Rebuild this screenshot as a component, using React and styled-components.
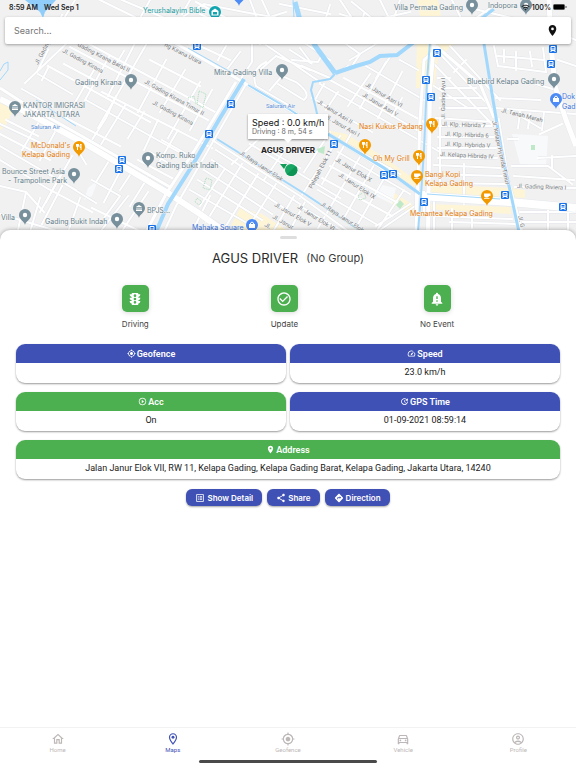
import React from 'react';
import styled, { createGlobalStyle, css } from 'styled-components';
import {
    MdTraffic, MdCheckCircleOutline, MdNotificationImportant, MdGpsFixed, MdSpeed,
    MdPlayCircleOutline, MdUpdate, MdLocationOn, MdListAlt, MdShare, MdDirections,
    MdOutlineHome, MdOutlineLocationOn, MdOutlineDirectionsCar, MdOutlineAccountCircle, MdWifi
} from 'react-icons/md';

const blue = '#3f51b5';
const green = '#4caf50';

const GlobalStyle = createGlobalStyle`
    * { box-sizing: border-box; }
    body {
        margin: 0;
        background: #fff;
        color: #212121;
        font-family: Inter, "Liberation Sans", sans-serif;
    }
    button, input { font-family: inherit; }
`

const Screen = styled.div`
    display: flex;
    flex-direction: column;
    min-height: 100vh;
`
const MapArea = styled.section`
    position: relative;
    height: 242px;
    overflow: hidden;
    background: #f1f1f2;
`
const MapSvg = styled.svg`
    position: absolute;
    top: 0;
    left: 0;
    width: 100%;
    height: 100%;
`
const StatusBar = styled.div`
    position: relative;
    display: flex;
    align-items: center;
    gap: 6px;
    height: 14px;
    padding: 0 9px;
    font-size: 7px;
    font-weight: 600;
    color: #222;
`
const StatusRight = styled.div`
    display: flex;
    align-items: center;
    gap: 2px;
    margin-left: auto;
`
const SearchBar = styled.form`
    position: relative;
    display: flex;
    align-items: center;
    height: 27px;
    margin: 3px 5px 0;
    padding: 0 12px 0 9px;
    background: #fff;
    border-radius: 2px;
    box-shadow: 0 1px 3px rgba(0, 0, 0, 0.35);
`
const SearchInput = styled.input`
    flex: 1;
    min-width: 0;
    padding: 0;
    border: 0;
    outline: 0;
    background: none;
    font-size: 9px;
    &::placeholder {
        color: #757575;
        opacity: 1;
    }
`
const PinButton = styled.button`
    display: flex;
    padding: 0;
    border: 0;
    background: none;
    color: #111;
    font-size: 13px;
`
const VehicleTip = styled.div`
    position: absolute;
    top: 114px;
    left: 50%;
    width: 80px;
    transform: translateX(-50%);
    padding: 3px 4px;
    background: #fff;
    font-size: 9px;
    line-height: 11px;
    white-space: nowrap;
    color: #111;
    box-shadow: 0 1px 2px rgba(0, 0, 0, 0.45);
    &:after {
        content: '';
        position: absolute;
        top: 100%;
        left: 50%;
        margin-left: -4px;
        border: 4px solid transparent;
        border-top-color: #fff;
        border-bottom: 0;
    }
`
const TipNote = styled.div`
    font-size: 7px;
    line-height: 8px;
    color: #666;
`
const Sheet = styled.main`
    position: relative;
    flex: 1;
    margin-top: -12px;
    padding-top: 6px;
    background: #fff;
    border-radius: 10px 10px 0 0;
    box-shadow: 0 0 4px rgba(0, 0, 0, 0.35);
`
const Handle = styled.div`
    width: 17px;
    height: 3px;
    margin: 0 auto;
    border-radius: 2px;
    background: #dedede;
`
const Title = styled.h1`
    display: flex;
    justify-content: center;
    align-items: center;
    gap: 8px;
    margin: 9px 0 0;
    font-size: 13px;
    line-height: 20px;
    font-weight: 400;
    color: #2b2b2b;
    small {
        font-size: 11px;
        color: #3c3c3c;
    }
`
const StateRow = styled.div`
    display: flex;
    justify-content: space-evenly;
    margin-top: 17px;
`
const StateItem = styled.div`
    display: flex;
    flex-direction: column;
    align-items: center;
    gap: 7px;
    font-size: 8px;
    line-height: 10px;
    color: #444;
`
const StateTile = styled.button`
    display: flex;
    align-items: center;
    justify-content: center;
    width: 27px;
    height: 27px;
    padding: 0;
    border: 0;
    border-radius: 5px;
    background: ${green};
    color: #fff;
    font-size: 16px;
    box-shadow: 0 1px 5px rgba(0, 0, 0, 0.15);
`
const CardGrid = styled.div`
    display: grid;
    grid-template-columns: 1fr 1fr;
    gap: 9px 4px;
    padding: 15px 16px 0;
`
const Card = styled.section`
    height: 39px;
    overflow: hidden;
    border-radius: 9px;
    background: #fff;
    font-family: Roboto, Inter, sans-serif;
    box-shadow: 0 1px 2px rgba(0, 0, 0, 0.4);
    text-align: center;
    ${props => props.$wide && css`
        grid-column: 1 / -1;
    `}
`
const CardHead = styled.h2`
    display: flex;
    align-items: center;
    justify-content: center;
    gap: 1px;
    height: 19px;
    margin: 0;
    background: ${props => props.$color};
    color: #fff;
    font-size: 9px;
    font-weight: 600;
`
const CardBody = styled.p`
    margin: 0;
    font-size: 9px;
    line-height: 19px;
`
const Actions = styled.div`
    display: flex;
    justify-content: center;
    gap: 5px;
    padding: 10px 16px;
`
const ActionButton = styled.button`
    display: flex;
    align-items: center;
    gap: 2px;
    height: 17px;
    padding: 0 9px;
    border: 0;
    border-radius: 6px;
    background: ${blue};
    color: #fff;
    font-size: 8px;
    font-weight: 600;
    box-shadow: 0 1px 2px rgba(0, 0, 0, 0.35);
    svg {
        font-size: 10px;
    }
`
const TabBar = styled.nav`
    position: relative;
    display: grid;
    grid-template-columns: repeat(5, 1fr);
    height: 33px;
    padding-top: 4px;
    background: #fff;
    border-top: 1px solid #f2f2f2;
`
const Tab = styled.a`
    display: flex;
    flex-direction: column;
    align-items: center;
    color: ${props => props.$active ? blue : '#bdb7b7'};
    font-family: Roboto, Inter, sans-serif;
    font-size: 6px;
    line-height: 8px;
    text-decoration: none;
    svg {
        font-size: 14px;
    }
`
const HomeIndicator = styled.div`
    width: 31%;
    height: 3px;
    margin: 0 auto 5px;
    border-radius: 2px;
    background: #4a4a4a;
`

// ---- map data ----

const lakes = [
    'M25 0H56L45 12L43 18L40 12Z',
];

const yellow = [
    'M417 34L456 42L438 58L434 88H416Z',
    'M417 0H438L441 16H420Z',
    'M326 130L346 134L384 157L418 182V192L384 171Z',
    'M240 208L262 214L290 232H228Z',
    'M380 184L412 204L417 216L384 200Z',
    'M427 184L512 188L525 190V198L427 192Z',
    'M427 204L511 207V214L427 209Z',
    'M0 98L14 108L6 125L0 130Z',
];

const minorRoads = [
    // north west
    'M67 43L25 83M60 25L75 0M62 15L46 46M22 89L52 106M48 66L150 122M38 74L72 94M37 72L48 50M64 64L94 80',
    'M94 70L66 118M110 55L85 100M124 51L116 64M134 45L108 96M70 47L208 120M78 38L215 112M150 60L200 86M48 68L42 80',
    'M147 43L98 128M166 60L138 112M185 70L160 112M200 82L168 138M212 90L190 130M100 0L190 44M122 0L212 38M150 0L140 18L230 60',
    'M86 100L204 166M102 92L212 148M126 104L100 146M144 112L128 138M158 120L144 150M178 130L158 164M66 118L120 146',
    // north centre
    'M190 0L182 14M200 14L260 44M184 16L204 4L244 12L300 22M196 2L230 20L290 28M262 0L272 22M250 0L256 16M280 4L330 14M286 12L260 20',
    'M252 44V62L240 80M240 52L228 68M226 46L218 60M266 45L320 82M266 62Q250 70 256 86L290 106M260 70L276 56L310 70M278 84L304 100Q312 94 296 82L282 76L270 90',
    'M290 50L312 64L300 48M306 44L330 60M322 55L318 62L292 60M302 66L330 78L348 66M346 44L360 54L352 66',
    'M340 0L356 24M352 2L374 20L410 12M364 14L356 40M380 0L390 20M340 14L372 24L416 20M330 5L322 30M376 44L350 60M400 0L394 18',
    // Asri and Elok grid
    'M320 84L440 152M330 80L352 92L420 132M344 78L424 122M366 66L424 100M370 74L348 106M386 62L360 108M402 72L378 118M392 54L376 78M400 60L418 70',
    'M312 98L372 132M324 84L316 98M338 92L326 110M402 98L392 116M340 136L300 198M352 132L322 184M364 150L318 228M378 158L344 218M390 168L358 224',
    'M346 144L400 174M338 152L410 194M330 166L400 204M322 178L392 216M318 190L376 224M418 204L380 230M410 204L376 226M404 190L376 232',
    // south centre
    'M216 150L300 204M212 160L290 212M204 170L272 214M198 180L262 220M190 190L252 226M180 200L228 230M210 196L196 224M224 170L200 206',
    'M242 164L206 222M258 174L226 226M276 184L248 228M294 196L274 230M306 200L290 230M250 144L340 198M262 136L232 164M286 148L264 180M330 132L304 172M264 148L300 168M300 206L344 232',
    // south west
    'M0 124L60 152M0 134L50 160M6 120L38 136M40 120L22 150M56 130L40 160M0 146L76 190M0 160L50 190L92 212M96 203L46 172M72 156L40 212M80 154L86 164',
    'M0 186L26 192L44 212M26 192L18 230M40 198L30 232M62 186L42 224M92 180L120 196L104 218M136 166L120 190M150 174L130 206M112 156L96 182M124 164L104 202',
    'M92 208L150 236M138 160L172 178M150 152L180 170M162 140L190 156M88 146L106 118L116 96M60 176L46 202M0 214L60 232M80 198L68 232M128 196L100 232M148 192L120 234',
    // east
    'M440 54L495 112M450 46L500 100M466 60L454 72M432 62L492 124M434 86L468 108M440 88H476M440 98H482M440 108H490M436 118L494 122M438 78L450 78',
    'M494 46L498 66L546 72L543 48M504 50V62M516 52V70M530 52L532 66M498 56L544 60M470 8L520 20L550 24M452 0L462 20M496 4L476 18M536 84L556 90M496 98L540 100',
    'M438 126H492M438 137H494M438 148H496M438 158H497M434 165L500 168M434 174L502 176M434 183L505 184M440 118V186M434 196V232M452 209V232M472 210V228M450 222L515 224M464 164V204M434 216L512 219M495 108L575 114',
    'M512 166H548L572 184M514 176L574 180M515 187L576 188M508 139H518M538 158L576 156M540 134L562 124M552 156V168M510 110L540 128M520 112L518 128M530 114L528 128M544 112L542 130M520 212H576M522 222H576M548 210V232M568 212V232M558 60L576 66M556 32L576 40',
];

const mainRoads = [
    { d: 'M0 99L30 114L84 143L168 193L200 214L228 234', w: 6 },
    { d: 'M0 88L28 106L78 134L170 187', w: 3 },
    { d: 'M236 82L196 148L166 194L146 232', w: 3 },
    { d: 'M246 84L222 126L176 206L164 232', w: 2 },
    { d: 'M170 40L236 78L300 116L382 168L418 192', w: 3 },
    { d: 'M212 140L300 196L352 234', w: 2 },
    { d: 'M420 196L510 202L576 208', w: 8 },
    { d: 'M416 192H424V214H416Z', w: 2 },
    { d: 'M434 44L430 90L428 230', w: 4 },
    { d: 'M438 48L424 60L420 120L416 230', w: 3 },
    { d: 'M436 46L480 84L494 118', w: 3 },
    { d: 'M498 118L508 180L522 232', w: 3 },
    { d: 'M549 0L551 46L555 86L566 120L576 146', w: 5 },
];

const water = [
    { d: 'M244 79L220 118L192 166L168 204L156 232', w: 4 },
    { d: 'M36 100L76 126', w: 1 },
    { d: 'M188 48L236 75', w: 1 },
    { d: 'M248 85L284 106L328 134', w: 2 },
    { d: 'M328 134L384 168L420 194', w: 3 },
    { d: 'M427 194L500 199', w: 1 },
    { d: 'M217 139L305 194L362 232', w: 2 },
    { d: 'M293 0L294 18', w: 1 },
    { d: 'M295 2L300 20L316 47L335 73', w: 5 },
    { d: 'M335 73L356 66L370 62L380 56L397 55L414 42', w: 4 },
    { d: 'M335 74L330 79L313 82L311 90L315 105L318 118', w: 2 },
    { d: 'M482 18L494 9', w: 3 },
    { d: 'M430 42L427 80L424 150L421 195L418 232', w: 2 },
    { d: 'M484 44L493 100L503 158L519 232', w: 3 },
    { d: 'M0 80L8 70V62L4 64L0 71', w: 1 },
];

const greens = [
    'M317 149L325 146L324 154L318 152Z', 'M396 205L400 200L404 204L400 209Z', 'M531 145H535V150H531Z',
];

const streetNames = [
    { x: 38, y: 65, r: -62, t: 'Jl. Gading' },
    { x: 62, y: 52, r: 28, t: 'Jl. Gading Kirana' },
    { x: 77, y: 46, r: 27, t: 'Gading Kirana Barat II' },
    { x: 164, y: 46, r: 27, t: 'ng Kirana Utara' },
    { x: 144, y: 83, r: 29, t: 'Jl. Gading Kirana Timur II' },
    { x: 152, y: 104, r: 28, t: 'Jl. Gading Kirana' },
    { x: 317, y: 103, r: 32, t: 'Jl. Janur Asri II' },
    { x: 325, y: 118, r: 30, t: 'Jl. Janur Asri I' },
    { x: 365, y: 86, r: 31, t: 'Jl. Janur Asri VI' },
    { x: 362, y: 96, r: 31, t: 'Jl. Janur Asri V' },
    { x: 239, y: 154, r: 33, t: 'Jl. Raya Janur Elok' },
    { x: 320, y: 205, r: 33, t: 'Jl. Raya Janur Elok' },
    { x: 274, y: 206, r: 30, t: 'Jl. Janur Elok V' },
    { x: 297, y: 208, r: 32, t: 'Jl. Janur Elok VI' },
    { x: 272, y: 218, r: 30, t: 'Jl. Janur' },
    { x: 264, y: 226, r: 30, t: 'Jl.' },
    { x: 335, y: 161, r: 31, t: 'Jl. Janur Elok X' },
    { x: 338, y: 176, r: 33, t: 'Jl. Janur Elok IX' },
    { x: 312, y: 189, r: -62, t: 'Pelepah Elok 11' },
    { x: 445, y: 119, r: -90, t: 'Jl. Gading Ayu I' },
    { x: 501, y: 112, r: 14, t: 'Jl. Tanah Merah' },
    { x: 442, y: 126, r: 2, t: 'Jl. Klp. Hibrida 7' },
    { x: 445, y: 136, r: 2, t: 'Jl. Klp. Hibrida 6' },
    { x: 445, y: 146, r: 2, t: 'Jl. Klp. Hybrida V' },
    { x: 440, y: 156, r: 3, t: 'Jl. Kelapa Hibrida IV' },
    { x: 492, y: 121, r: 78, t: 'Jl. Kelapa Hybrida Timur' },
    { x: 517, y: 188, r: 2, t: 'Jl. Gading Riviera I' },
    { x: 518, y: 216, r: 78, t: 'Jl. G' },
];

const slate = '#667e8a';
const orange = '#e37c0a';
const places = [
    { x: 143, y: 13, t: 'Yerushalayim Bible', c: '#17999f' },
    { x: 394, y: 10, t: 'Villa Permata Gading', c: slate },
    { x: 488, y: 8, t: 'Indopora', c: slate },
    { x: 75, y: 85, t: 'Gading Kirana', c: slate },
    { x: 214, y: 75, t: 'Mitra Gading Villa', c: slate },
    { x: 467, y: 84, t: 'Bluebird Kelapa Gading', c: slate },
    { x: 23, y: 108, t: 'KANTOR IMIGRASI', c: slate },
    { x: 23, y: 117, t: 'JAKARTA UTARA', c: slate },
    { x: 562, y: 99, t: 'Dok', c: '#3d76dc' },
    { x: 562, y: 109, t: 'Gad', c: '#3d76dc' },
    { x: 31, y: 148, t: "McDonald's", c: orange },
    { x: 22, y: 157, t: 'Kelapa Gading', c: orange },
    { x: 2, y: 174, t: 'Bounce Street Asia', c: slate },
    { x: 8, y: 183, t: '- Trampoline Park', c: slate },
    { x: 156, y: 158, t: 'Komp. Ruko', c: slate },
    { x: 156, y: 168, t: 'Gading Bukit Indah', c: slate },
    { x: 147, y: 213, t: 'BPJS...', c: slate },
    { x: 45, y: 224, t: 'Gading Bukit Indah', c: slate },
    { x: 1, y: 220, t: 'Villa', c: slate },
    { x: 192, y: 230, t: 'Mahaka Square', c: '#3d76dc' },
    { x: 359, y: 129, t: 'Nasi Kukus Padang', c: orange },
    { x: 373, y: 161, t: 'Oh My Grill', c: orange },
    { x: 425, y: 177, t: 'Bangi Kopi', c: orange },
    { x: 425, y: 186, t: 'Kelapa Gading', c: orange },
    { x: 410, y: 216, t: 'Menantea Kelapa Gading', c: orange },
];

const pins = [
    [131, 80], [282, 70], [15, 107, 'bank'], [148, 158], [74, 174], [139, 208, 'bank'], [117, 219],
    [25, 215], [472, 5], [526, 5], [554, 79], [556, 99, 'bag'], [79, 147, 'fork'], [432, 124, 'fork'],
    [419, 156, 'fork'], [365, 145, 'fork'], [417, 176, 'cup'], [487, 196, 'cup'], [252, 225, 'bag'], [239, -4, 'bag'],
];

const stops = [
    [197, 46], [231, 104], [209, 134], [122, 160], [119, 169], [152, 229], [334, 144], [384, 175], [393, 174],
    [437, 53], [426, 80], [431, 97], [424, 202], [505, 195], [563, 207], [553, 49], [551, 64],
];

const MapText = styled.text`
    font-family: Inter, Roboto, sans-serif;
    font-size: 7px;
    fill: ${props => props.$color};
    stroke: #f7f7f7;
    stroke-width: 1px;
    stroke-linejoin: round;
    paint-order: stroke;
    ${props => props.$street && css`
        font-family: Roboto, Inter, sans-serif;
        font-size: 6px;
    `}
`

const pinColors = { fork: '#f29900', cup: '#f29900', bag: '#4c8bf5' };

function PinGlyph({ kind }) {
    if (kind === 'fork') return <path d="M-2.5 -3V-1Q-2.5 0 -1.5 0V3M-.5 -3V-1Q-.5 0 -1.5 0V-3M2 3V-3Q.7 -2 1 .5H2" stroke="#fff" fill="none" />;
    if (kind === 'cup') return <path d="M-3 -2.5H3.5V0H2Q1.500 1.500 0 1.500H-1Q-3 1.500 -3 -.5ZM-3 2.200H2.500V3H-3Z" fill="#fff" />;
    if (kind === 'bag') return <g><path d="M-3 -1H3V3H-3Z" fill="#fff" /><path d="M-1.500 0V-2Q0 -4 1.500 -2V0" stroke="#fff" fill="none" /></g>;
    if (kind === 'bank') return <path d="M-3.200 -1L0 -3L3.200 -1ZM-2.500 -.5H-1.500V2H-2.500ZM-.5 -.5H.5V2H-.5ZM1.500 -.5H2.500V2H1.500ZM-3 2H3V3H-3Z" fill="#fff" />;
    return <circle r="2.200" fill="#fff" />;
}

function CityMap() {
    return <MapSvg viewBox="0 0 576 242" preserveAspectRatio="xMidYMid slice" role="img" aria-label="Map">
        <rect width="576" height="242" fill="#f1f1f2" />
        {yellow.map(d => <path key={d} d={d} fill="#fef5d6" />)}
        <path d="M512 134L548 136L546 166L520 164Z M378 184L396 188L392 204L376 196Z M88 188L98 180L92 196L84 200Z" fill="#f8f9fa" />
        {minorRoads.map(d => <path key={d} d={d} fill="none" stroke="#e3e5e9" strokeWidth="3" />)}
        {minorRoads.map(d => <path key={d} d={d} fill="none" stroke="#fff" strokeWidth="2" strokeLinecap="round" />)}
        {mainRoads.map(r => <path key={r.d} d={r.d} fill="none" stroke="#e6e8eb" strokeWidth={r.w + 1} />)}
        {mainRoads.map(r => <path key={r.d} d={r.d} fill="none" stroke="#fff" strokeWidth={r.w} />)}
        {lakes.map(d => <path key={d} d={d} fill="#90cdfb" />)}
        {water.map(r => <path key={r.d} d={r.d} fill="none" stroke="#a2d8fb" strokeWidth={r.w} />)}
        {greens.map(d => <path key={d} d={d} fill="#bfe8c9" />)}
        <g fill="none" stroke="#a9dcb5" strokeDasharray="1 1">
            <path d="M206 178L212 180L210 190L203 188ZM197 198L202 202L199 205L195 202ZM358 196L364 192L366 198L360 200ZM199 91L206 94L203 108L197 104ZM188 98L194 96L196 104" />
        </g>
        {streetNames.map(s => <MapText key={s.t + s.x} $street $color="#777c81" x={s.x} y={s.y} transform={`rotate(${s.r} ${s.x} ${s.y})`}>{s.t}</MapText>)}
        <MapText $street $color="#5b8fd6" x="31" y="129">Saluran Air</MapText>
        <MapText $street $color="#5b8fd6" x="266" y="108">Saluran Air</MapText>
        {stops.map(([x, y]) => <g key={`${x}-${y}`} transform={`translate(${x} ${y})`}>
            <rect x="-4" y="-4" width="8" height="8" rx="1" fill="#1a73e8" />
            <path d="M-2 -2.500H2V1.500H-2Z" fill="none" stroke="#fff" />
            <path d="M-2 2V3M2 2V3M-2 0H2" stroke="#fff" />
        </g>)}
        {places.map(p => <MapText key={p.t + p.y} $color={p.c} x={p.x} y={p.y}>{p.t}</MapText>)}
        <circle cx="215" cy="12" r="6" fill="#12a4af" />
        <path d="M211.500 11L215 8.500L218.500 11V15.500H211.500ZM213 12V14.500H217V12Z" fill="#fff" fillRule="evenodd" />
        {pins.map(([x, y, kind]) => <g key={`${x}-${y}`} transform={`translate(${x} ${y})`}>
            <path d="M0 10C-.5 6 -6 5 -6 0A6 6 0 0 1 6 0C6 5 .5 6 0 10Z" fill={pinColors[kind] || '#78909c'} />
            <PinGlyph kind={kind} />
        </g>)}
        <text x="288" y="153" textAnchor="middle" fontSize="8" fontWeight="700" fill="#222" stroke="#fafafa" strokeWidth="1" paintOrder="stroke">AGUS DRIVER</text>
        <path d="M280 164L287 164L284 169Z" fill="#0f9d58" />
        <circle cx="291" cy="170" r="6" fill="#17a663" />
        <path d="M287 174A6 6 0 0 0 296 166Z" fill="#0c9455" />
    </MapSvg>
}

const states = [
    { label: 'Driving', Icon: MdTraffic },
    { label: 'Update', Icon: MdCheckCircleOutline },
    { label: 'No Event', Icon: MdNotificationImportant },
];

const cards = [
    { label: 'Geofence', Icon: MdGpsFixed, color: blue, value: '' },
    { label: 'Speed', Icon: MdSpeed, color: blue, value: '23.0 km/h' },
    { label: 'Acc', Icon: MdPlayCircleOutline, color: green, value: 'On' },
    { label: 'GPS Time', Icon: MdUpdate, color: blue, value: '01-09-2021 08:59:14' },
    { label: 'Address', Icon: MdLocationOn, color: green, wide: true,
        value: 'Jalan Janur Elok VII, RW 11, Kelapa Gading, Kelapa Gading Barat, Kelapa Gading, Jakarta Utara, 14240' },
];

const actions = [
    { label: 'Show Detail', Icon: MdListAlt },
    { label: 'Share', Icon: MdShare },
    { label: 'Direction', Icon: MdDirections },
];

const tabs = [
    { label: 'Home', Icon: MdOutlineHome },
    { label: 'Maps', Icon: MdOutlineLocationOn, active: true },
    { label: 'Geofence', Icon: MdGpsFixed },
    { label: 'Vehicle', Icon: MdOutlineDirectionsCar },
    { label: 'Profile', Icon: MdOutlineAccountCircle },
];

export default function App() {
    return <Screen>
        <GlobalStyle />
        <MapArea>
            <CityMap />
            <StatusBar>
                <span>8:59 AM</span>
                <span>Wed Sep 1</span>
                <StatusRight>
                    <MdWifi size={9} />
                    <span>100%</span>
                    <svg width="14" height="6" viewBox="0 0 14 6">
                        <rect x=".5" y=".5" width="11" height="5" rx="1" fill="#000" stroke="#555" />
                        <path d="M13 2V4" stroke="#555" />
                    </svg>
                </StatusRight>
            </StatusBar>
            <SearchBar onSubmit={e => e.preventDefault()}>
                <SearchInput type="text" placeholder="Search..." aria-label="Search" />
                <PinButton type="button" aria-label="Locate"><MdLocationOn /></PinButton>
            </SearchBar>
            <VehicleTip>
                Speed : 0.0 km/h
                <TipNote>Driving : 8 m, 54 s</TipNote>
            </VehicleTip>
        </MapArea>
        <Sheet>
            <Handle />
            <Title>AGUS DRIVER <small>(No Group)</small></Title>
            <StateRow>
                {states.map(({ label, Icon }) =>
                    <StateItem key={label}>
                        <StateTile aria-label={label}><Icon /></StateTile>
                        {label}
                    </StateItem>
                )}
            </StateRow>
            <CardGrid>
                {cards.map(({ label, Icon, color, value, wide }) =>
                    <Card key={label} $wide={wide}>
                        <CardHead $color={color}><Icon /> {label}</CardHead>
                        <CardBody>{value}</CardBody>
                    </Card>
                )}
            </CardGrid>
            <Actions>
                {actions.map(({ label, Icon }) =>
                    <ActionButton key={label}><Icon /> {label}</ActionButton>
                )}
            </Actions>
        </Sheet>
        <TabBar>
            {tabs.map(({ label, Icon, active }) =>
                <Tab key={label} href="#" $active={active}><Icon />{label}</Tab>
            )}
        </TabBar>
        <HomeIndicator />
    </Screen>
}
